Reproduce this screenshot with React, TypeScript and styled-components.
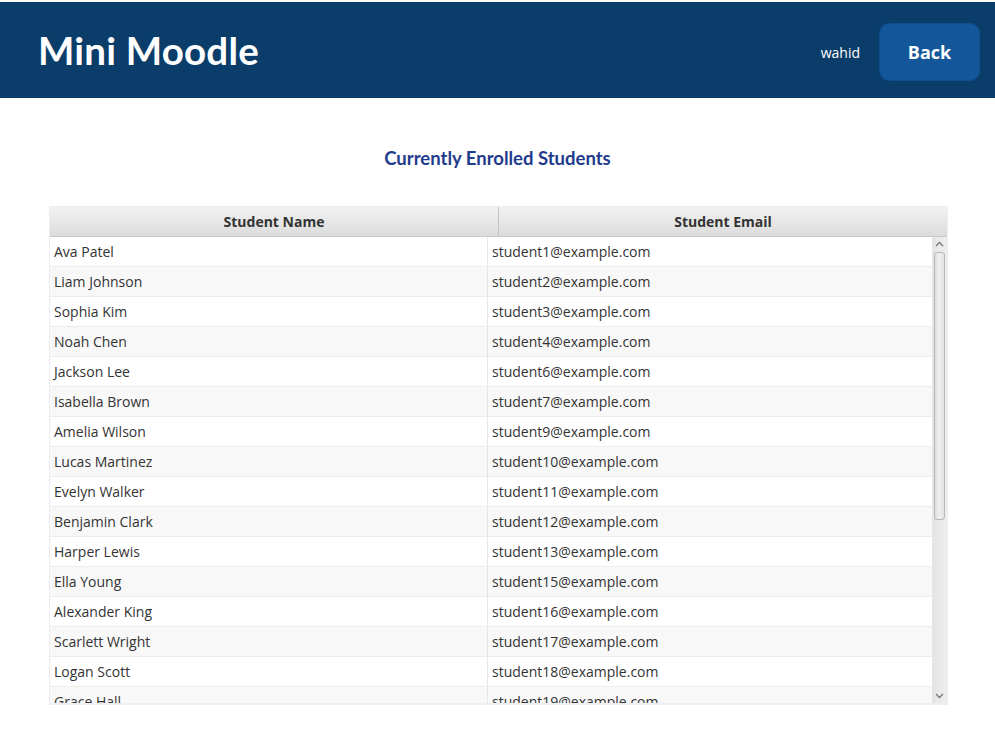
import React from "react";
import styled, { createGlobalStyle } from "styled-components";

const GlobalStyle = createGlobalStyle`
  html, body {
    margin: 0;
    padding: 0;
    background: #ffffff;
  }
  body {
    font-family: "Open Sans", "Noto Sans", sans-serif;
  }
`;

const students = [
  { name: "Ava Patel", email: "student1@example.com" },
  { name: "Liam Johnson", email: "student2@example.com" },
  { name: "Sophia Kim", email: "student3@example.com" },
  { name: "Noah Chen", email: "student4@example.com" },
  { name: "Jackson Lee", email: "student6@example.com" },
  { name: "Isabella Brown", email: "student7@example.com" },
  { name: "Amelia Wilson", email: "student9@example.com" },
  { name: "Lucas Martinez", email: "student10@example.com" },
  { name: "Evelyn Walker", email: "student11@example.com" },
  { name: "Benjamin Clark", email: "student12@example.com" },
  { name: "Harper Lewis", email: "student13@example.com" },
  { name: "Ella Young", email: "student15@example.com" },
  { name: "Alexander King", email: "student16@example.com" },
  { name: "Scarlett Wright", email: "student17@example.com" },
  { name: "Logan Scott", email: "student18@example.com" },
  { name: "Grace Hall", email: "student19@example.com" },
];

const Page = styled.div`
  display: flex;
  flex-direction: column;
  padding-top: 2px;
`;

const TopBar = styled.header`
  height: 96px;
  background: #0b3d6b;
  display: flex;
  align-items: center;
  justify-content: space-between;
  padding: 0 15px 0 38px;
`;

const Brand = styled.h1`
  margin: 0;
  color: #ffffff;
  font-family: Lato, "Open Sans", sans-serif;
  font-weight: 700;
  font-size: 38.5px;
  letter-spacing: 0.2px;
`;

const UserBox = styled.div`
  display: flex;
  align-items: center;
  gap: 19px;
  padding-top: 4px;
`;

const UserName = styled.span`
  color: #ffffff;
  font-size: 14px;
`;

const BackButton = styled.button`
  width: 101px;
  height: 58px;
  border-radius: 10px;
  border: 1px solid #0f4e8a;
  background: #13579a;
  color: #ffffff;
  font-family: "Open Sans", sans-serif;
  font-weight: 700;
  font-size: 18px;
  cursor: pointer;
`;

const Content = styled.main`
  display: flex;
  flex-direction: column;
  align-items: center;
  padding-top: 49px;
`;

const SectionTitle = styled.h2`
  margin: 0 0 37px;
  color: #1f3b8c;
  font-family: Lato, "Open Sans", sans-serif;
  font-weight: 700;
  font-size: 18.5px;
`;

const TableFrame = styled.div`
  box-sizing: border-box;
  width: 899px;
  margin-left: 2px;
  display: flex;
  flex-direction: column;
  border: 1px solid #ececf2;
  border-bottom: 2px solid #eeeef4;
`;

const HeadRow = styled.div`
  display: grid;
  grid-template-columns: 448px 1fr;
  height: 29px;
  background: linear-gradient(#f2f2f2, #dcdcdc);
  border-bottom: 1px solid #c9c9c9;
`;

const HeadCell = styled.div<{ $divider?: boolean }>`
  display: flex;
  align-items: center;
  justify-content: center;
  font-weight: 700;
  font-size: 14px;
  color: #333333;
  border-left: ${(p) => (p.$divider ? "1px solid #c4c4c4" : "none")};
`;

const BodyArea = styled.div`
  display: flex;
  height: 466px;
`;

const Viewport = styled.div`
  flex: 1;
  overflow: hidden;
`;

const Row = styled.div<{ $odd: boolean }>`
  display: grid;
  grid-template-columns: 437px 1fr;
  height: 29px;
  border-bottom: 1px solid #ececec;
  background: ${(p) => (p.$odd ? "#f8f8f8" : "#ffffff")};
`;

const Cell = styled.div<{ $divider?: boolean }>`
  display: flex;
  align-items: center;
  padding: 0 0 1px 4px;
  font-size: 14px;
  color: #333333;
  white-space: nowrap;
  border-left: ${(p) => (p.$divider ? "1px solid #e6e6e6" : "none")};
`;

const ScrollTrack = styled.div`
  width: 15px;
  display: flex;
  flex-direction: column;
  align-items: center;
  background: linear-gradient(90deg, #e4e4e4, #eeeeee);
`;

const ArrowButton = styled.div`
  height: 14px;
  width: 100%;
  display: flex;
  align-items: center;
  justify-content: center;
`;

const Thumb = styled.div`
  width: 11px;
  height: 268px;
  margin-top: 1px;
  box-sizing: border-box;
  border: 1px solid #b8b8b8;
  border-radius: 3px;
  background: linear-gradient(90deg, #dcdcdc, #f0f0f0 45%, #e2e2e2);
`;

const Spacer = styled.div`
  flex: 1;
`;

const Chevron = ({ down }: { down?: boolean }) => (
  <svg width="9" height="6" viewBox="0 0 9 6">
    <path
      d={down ? "M1 1 L4.5 4.5 L8 1" : "M1 5 L4.5 1.5 L8 5"}
      fill="none"
      stroke="#777"
      strokeWidth="1.3"
    />
  </svg>
);

const App: React.FC = () => {
  return (
    <Page>
      <GlobalStyle />
      <TopBar>
        <Brand>Mini Moodle</Brand>
        <UserBox>
          <UserName>wahid</UserName>
          <BackButton>Back</BackButton>
        </UserBox>
      </TopBar>
      <Content>
        <SectionTitle>Currently Enrolled Students</SectionTitle>
        <TableFrame>
          <HeadRow>
            <HeadCell>Student Name</HeadCell>
            <HeadCell $divider>Student Email</HeadCell>
          </HeadRow>
          <BodyArea>
            <Viewport>
              {students.map((s, i) => (
                <Row key={s.email} $odd={i % 2 === 1}>
                  <Cell>{s.name}</Cell>
                  <Cell $divider>{s.email}</Cell>
                </Row>
              ))}
            </Viewport>
            <ScrollTrack>
              <ArrowButton>
                <Chevron />
              </ArrowButton>
              <Thumb />
              <Spacer />
              <ArrowButton>
                <Chevron down />
              </ArrowButton>
            </ScrollTrack>
          </BodyArea>
        </TableFrame>
      </Content>
    </Page>
  );
}

export default App;
